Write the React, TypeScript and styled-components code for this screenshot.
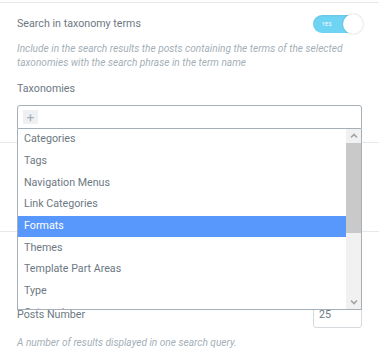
import styled, { createGlobalStyle } from 'styled-components'

const GlobalStyle = createGlobalStyle`
  html, body {
    margin: 0;
    padding: 0;
    background: #fff;
  }
  body {
    font-family: Roboto, Arial, sans-serif;
    -webkit-font-smoothing: antialiased;
  }
`

const Panel = styled.div`
  width: 379px;
  height: 364px;
  overflow: hidden;
  background: #fff;
  padding-top: 2px;
  box-sizing: border-box;
`

const Section = styled.div<{ $height: number }>`
  border-top: 1px solid #e6e9ec;
  height: ${p => p.$height}px;
  padding: 0 17px;
  box-sizing: border-box;
`

const ControlRow = styled.div<{ $top: number }>`
  display: flex;
  align-items: center;
  justify-content: space-between;
  padding-top: ${p => p.$top}px;
`

const Label = styled.span`
  font-size: 10.7px;
  line-height: 14px;
  color: #6d7882;
`

const Description = styled.div<{ $top: number }>`
  margin-top: ${p => p.$top}px;
  font-size: 10.15px;
  line-height: 14px;
  font-style: italic;
  color: #a4afb7;
`

const Switch = styled.div`
  position: relative;
  width: 49px;
  height: 18px;
  border-radius: 9px;
  background: #6fd4f4;
  box-shadow: inset 0 1px 2px rgba(0, 0, 0, 0.08);
  display: flex;
  align-items: center;
`

const SwitchText = styled.span`
  font-size: 5px;
  color: #fff;
  margin-left: 9px;
  letter-spacing: 0.3px;
  text-transform: uppercase;
`

const Knob = styled.span`
  position: absolute;
  right: -1px;
  top: -1px;
  width: 20px;
  height: 20px;
  border-radius: 50%;
  background: #fff;
  box-shadow: 0 0 2px rgba(0, 0, 0, 0.25);
`

const SelectWrap = styled.div`
  position: relative;
  margin-top: 9px;
`

const Selection = styled.div`
  height: 24px;
  box-sizing: border-box;
  border: 1px solid #a4afb7;
  border-radius: 3px 3px 0 0;
  display: flex;
  align-items: center;
  padding-left: 5px;
`

const AddChip = styled.span`
  width: 15px;
  height: 14px;
  background: #eef0f2;
  color: #a4afb7;
  font-size: 13px;
  line-height: 13px;
  display: flex;
  align-items: center;
  justify-content: center;
`

const Dropdown = styled.div`
  position: absolute;
  left: 0;
  right: 0;
  top: 24px;
  height: 181px;
  box-sizing: border-box;
  border: 1px solid #a4afb7;
  border-top: none;
  background: #fff;
  display: flex;
  z-index: 10;
`

const Options = styled.ul`
  flex: 1;
  margin: 0;
  padding: 0;
  list-style: none;
  overflow: hidden;
`

const Option = styled.li<{ $active?: boolean }>`
  height: 21.7px;
  box-sizing: border-box;
  display: flex;
  align-items: center;
  padding: 0 6px 2px;
  font-size: 10.7px;
  color: ${p => (p.$active ? '#fff' : '#6d7882')};
  background: ${p => (p.$active ? '#5897fb' : 'transparent')};
`

const Scrollbar = styled.div`
  width: 15px;
  background: #f1f1f1;
  display: flex;
  flex-direction: column;
`

const Arrow = styled.div`
  height: 14px;
  display: flex;
  align-items: center;
  justify-content: center;
`

const Thumb = styled.div`
  height: 90px;
  background: #c9c9c9;
`

const Track = styled.div`
  flex: 1;
`

const NumberInput = styled.div`
  width: 49px;
  height: 27px;
  box-sizing: border-box;
  border: 1px solid #d5dadf;
  border-radius: 3px;
  font-size: 10.7px;
  color: #6d7882;
  display: flex;
  align-items: center;
  padding-left: 5px;
`

const taxonomies = [
  'Categories',
  'Tags',
  'Navigation Menus',
  'Link Categories',
  'Formats',
  'Themes',
  'Template Part Areas',
  'Type',
  'Categories',
]

function Chevron({ up }: { up?: boolean }) {
  return (
    <svg width="8" height="6" viewBox="0 0 8 6">
      <polyline
        points={up ? '1,4.5 4,1.5 7,4.5' : '1,1.5 4,4.5 7,1.5'}
        fill="none"
        stroke="#a3a3a3"
        strokeWidth="1.6"
      />
    </svg>
  )
}

export default function App() {
  return (
    <Panel>
      <GlobalStyle />
      <Section $height={140}>
        <ControlRow $top={12}>
          <Label>Search in taxonomy terms</Label>
          <Switch>
            <SwitchText>yes</SwitchText>
            <Knob />
          </Switch>
        </ControlRow>
        <Description $top={9}>
          Include in the search results the posts containing the terms of the selected
          taxonomies with the search phrase in the term name
        </Description>
        <ControlRow $top={12}>
          <Label>Taxonomies</Label>
        </ControlRow>
        <SelectWrap>
          <Selection>
            <AddChip>+</AddChip>
          </Selection>
          <Dropdown>
            <Options>
              {taxonomies.map((t, i) => (
                <Option key={i} $active={t === 'Formats'}>
                  {t}
                </Option>
              ))}
            </Options>
            <Scrollbar>
              <Arrow>
                <Chevron up />
              </Arrow>
              <Thumb />
              <Track />
              <Arrow>
                <Chevron />
              </Arrow>
            </Scrollbar>
          </Dropdown>
        </SelectWrap>
      </Section>
      <Section $height={89} />
      <Section $height={133}>
        <ControlRow $top={69}>
          <Label>Posts Number</Label>
          <NumberInput>25</NumberInput>
        </ControlRow>
        <Description $top={8}>A number of results displayed in one search query.</Description>
      </Section>
    </Panel>
  )
}
